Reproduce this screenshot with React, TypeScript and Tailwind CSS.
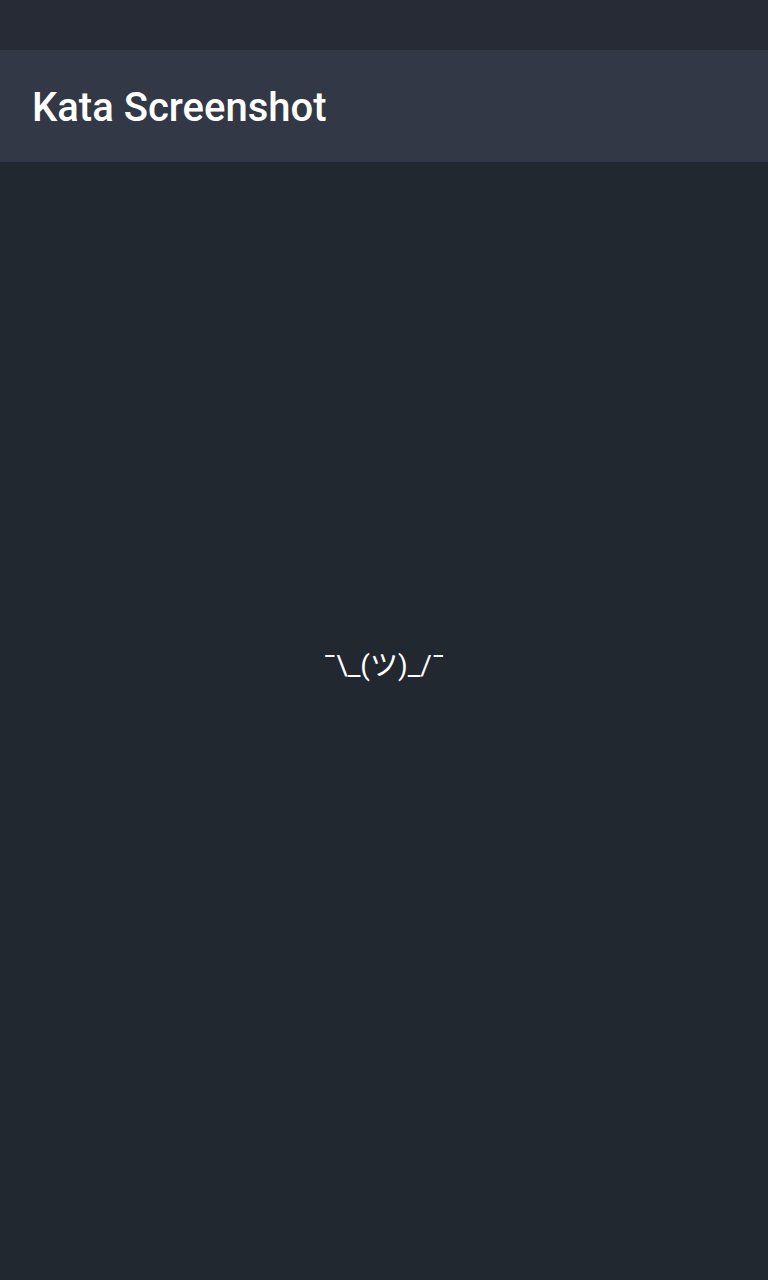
export default function App() {
  return (
    <div
      className="flex h-[1280px] w-full flex-col bg-[#222830] text-white"
      style={{ fontFamily: "Roboto, 'Noto Sans CJK JP', sans-serif" }}
    >
      {/* status bar */}
      <div className="h-[50px] shrink-0 bg-[#262b35]" />
      {/* app bar */}
      <div className="flex h-[112px] shrink-0 items-center bg-[#323845] px-8 pt-1">
        <h1 className="text-[40px] font-medium leading-none">Kata Screenshot</h1>
      </div>
      <div className="flex flex-1 items-center justify-center pb-[110px]">
        <span className="text-[28px] leading-none">¯\_(ツ)_/¯</span>
      </div>
    </div>
  );
}
